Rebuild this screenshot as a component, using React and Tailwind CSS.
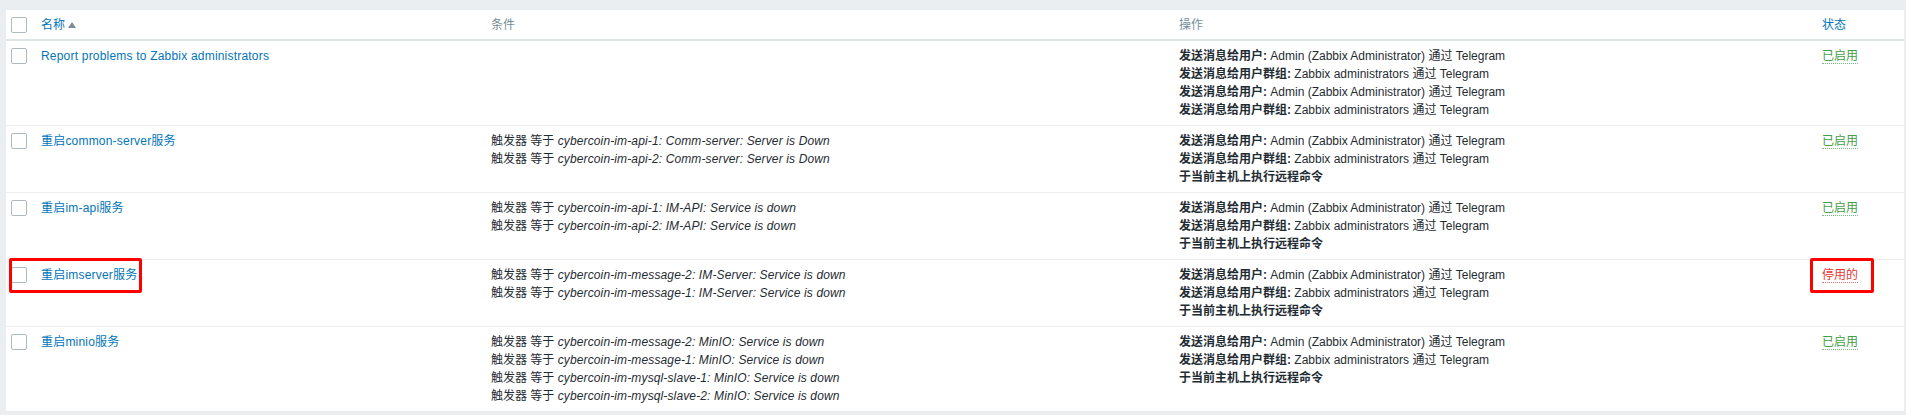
import React from "react";

const font = { fontFamily: '"Liberation Sans", Arial, "Noto Sans CJK SC", sans-serif' };

function Box() {
  return <div className="w-4 h-4 border border-[#acbbc2] rounded-[2px] bg-white" />;
}

function Status({ on }) {
  return on ? (
    <span className="text-[#429e47] border-b border-dotted border-[#429e47]/70">已启用</span>
  ) : (
    <span className="text-[#e33734] border-b border-dotted border-[#e33734]/70">停用的</span>
  );
}

const rows = [
  {
    name: "Report problems to Zabbix administrators",
    conds: [],
    ops: [
      ["发送消息给用户:", " Admin (Zabbix Administrator) 通过 Telegram"],
      ["发送消息给用户群组:", " Zabbix administrators 通过 Telegram"],
      ["发送消息给用户:", " Admin (Zabbix Administrator) 通过 Telegram"],
      ["发送消息给用户群组:", " Zabbix administrators 通过 Telegram"],
    ],
    on: true,
  },
  {
    name: "重启common-server服务",
    conds: [
      "cybercoin-im-api-1: Comm-server: Server is Down",
      "cybercoin-im-api-2: Comm-server: Server is Down",
    ],
    ops: [
      ["发送消息给用户:", " Admin (Zabbix Administrator) 通过 Telegram"],
      ["发送消息给用户群组:", " Zabbix administrators 通过 Telegram"],
      ["于当前主机上执行远程命令", ""],
    ],
    on: true,
  },
  {
    name: "重启im-api服务",
    conds: [
      "cybercoin-im-api-1: IM-API: Service is down",
      "cybercoin-im-api-2: IM-API: Service is down",
    ],
    ops: [
      ["发送消息给用户:", " Admin (Zabbix Administrator) 通过 Telegram"],
      ["发送消息给用户群组:", " Zabbix administrators 通过 Telegram"],
      ["于当前主机上执行远程命令", ""],
    ],
    on: true,
  },
  {
    name: "重启imserver服务",
    conds: [
      "cybercoin-im-message-2: IM-Server: Service is down",
      "cybercoin-im-message-1: IM-Server: Service is down",
    ],
    ops: [
      ["发送消息给用户:", " Admin (Zabbix Administrator) 通过 Telegram"],
      ["发送消息给用户群组:", " Zabbix administrators 通过 Telegram"],
      ["于当前主机上执行远程命令", ""],
    ],
    on: false,
    mark: true,
  },
  {
    name: "重启minio服务",
    conds: [
      "cybercoin-im-message-2: MinIO: Service is down",
      "cybercoin-im-message-1: MinIO: Service is down",
      "cybercoin-im-mysql-slave-1: MinIO: Service is down",
      "cybercoin-im-mysql-slave-2: MinIO: Service is down",
    ],
    ops: [
      ["发送消息给用户:", " Admin (Zabbix Administrator) 通过 Telegram"],
      ["发送消息给用户群组:", " Zabbix administrators 通过 Telegram"],
      ["于当前主机上执行远程命令", ""],
    ],
    on: true,
  },
];

export default function App() {
  return (
    <div className="w-[1906px] h-[415px] bg-[#ebeef0] pt-[10px] pl-[6px] pr-[2px] overflow-hidden" style={font}>
      <table className="w-[1898px] table-fixed border-collapse bg-white text-[12px] leading-[18px] text-[#1f2c33]">
        <colgroup>
          <col className="w-[30px]" />
          <col className="w-[450px]" />
          <col className="w-[688px]" />
          <col className="w-[643px]" />
          <col className="w-[87px]" />
        </colgroup>
        <thead>
          <tr className="h-[30px] border-b-2 border-[#dfe4e7]">
            <th className="pl-[5px] align-middle text-left">
              <Box />
            </th>
            <th className="px-[5px] text-left font-normal align-middle">
              <span className="inline-flex items-center gap-[3px] text-[#0275b8]">
                名称
                <svg width="8" height="6" viewBox="0 0 8 6" className="mt-[1px]">
                  <path d="M0 6 L4 0 L8 6 Z" fill="#7d8b94" />
                </svg>
              </span>
            </th>
            <th className="px-[5px] text-left font-normal align-middle text-[#768d99]">条件</th>
            <th className="px-[5px] text-left font-normal align-middle text-[#768d99]">操作</th>
            <th className="px-[5px] text-left font-normal align-middle text-[#0275b8]">状态</th>
          </tr>
        </thead>
        <tbody>
          {rows.map((r, i) => (
            <tr key={i} className="border-b border-[#ebeef0] align-top">
              <td className="pl-[5px] pt-[6px] pb-[6px] relative">
                <div className="mt-[1px]">
                  <Box />
                </div>
                {r.mark && (
                  <div className="absolute left-[3px] top-[-2px] w-[133px] h-[35px] border-[3px] border-[#ff0000] rounded-[2px] pointer-events-none" />
                )}
              </td>
              <td className="px-[5px] pt-[6px] pb-[6px]">
                <span className="text-[#0275b8] tracking-[0.2px]">{r.name}</span>
              </td>
              <td className="px-[5px] pt-[6px] pb-[6px]">
                {r.conds.map((c, j) => (
                  <div key={j}>
                    触发器 等于 <i className="tracking-[0.13px]">{c}</i>
                  </div>
                ))}
              </td>
              <td className="px-[5px] pt-[6px] pb-[6px]">
                {r.ops.map((o, j) => (
                  <div key={j}>
                    <b>{o[0]}</b>
                    {o[1]}
                  </div>
                ))}
              </td>
              <td className="px-[5px] pt-[6px] pb-[6px] relative">
                <Status on={r.on} />
                {r.mark && (
                  <div className="absolute left-[-7px] top-[-2px] w-[64px] h-[35px] border-[3px] border-[#ff0000] rounded-[2px] pointer-events-none" />
                )}
              </td>
            </tr>
          ))}
        </tbody>
      </table>
    </div>
  );
}
